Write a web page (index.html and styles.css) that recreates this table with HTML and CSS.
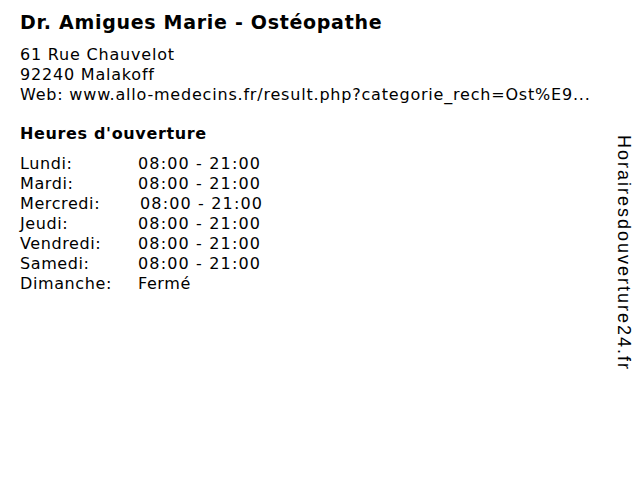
FILE: index.html
```html
<!DOCTYPE html>
<html lang="fr">
<head>
<meta charset="utf-8">
<link rel="stylesheet" href="styles.css">
</head>
<body>
<div class="page">
  <main class="info">
    <h1 class="title">Dr. Amigues Marie - Ostéopathe</h1>
    <div class="address">
      <div>61 Rue Chauvelot</div>
      <div>92240 Malakoff</div>
      <div>Web: www.allo-medecins.fr/result.php?categorie_rech=Ost%E9...</div>
    </div>
    <h2 class="hours-title">Heures d'ouverture</h2>
    <div class="hours">
      <span>Lundi:</span><span class="time">08:00 - 21:00</span>
      <span>Mardi:</span><span class="time">08:00 - 21:00</span>
      <span>Mercredi:</span><span class="time shift">08:00 - 21:00</span>
      <span>Jeudi:</span><span class="time">08:00 - 21:00</span>
      <span>Vendredi:</span><span class="time">08:00 - 21:00</span>
      <span>Samedi:</span><span class="time">08:00 - 21:00</span>
      <span>Dimanche:</span><span>Fermé</span>
    </div>
  </main>
  <aside class="brand">Horairesdouverture24.fr</aside>
</div>
</body>
</html>
```
FILE: styles.css
```css
html, body {
  margin: 0;
  padding: 0;
  background: #fff;
}
body {
  width: 640px;
  height: 480px;
  overflow: hidden;
  font-family: "DejaVu Sans", Verdana, sans-serif;
  color: #000;
}
.page {
  display: flex;
  justify-content: space-between;
  padding: 10px 0 0 20px;
}
.title {
  margin: 0;
  font-size: 19px;
  font-weight: bold;
  line-height: 24px;
  letter-spacing: 0.7px;
}
.address {
  margin-top: 11px;
  font-size: 16px;
  line-height: 20px;
  letter-spacing: 0.8px;
}
.hours-title {
  margin: 18px 0 0;
  font-size: 16px;
  font-weight: bold;
  line-height: 22px;
  letter-spacing: 0.65px;
}
.hours {
  margin-top: 9px;
  display: grid;
  grid-template-columns: 118px auto;
  font-size: 16px;
  line-height: 20px;
  letter-spacing: 0.6px;
}
.time {
  letter-spacing: 1.15px;
}
.shift {
  padding-left: 2px;
}
.brand {
  writing-mode: vertical-rl;
  font-family: "Liberation Sans", Arial, sans-serif;
  font-size: 18px;
  letter-spacing: 2px;
  margin-top: 125px;
  margin-right: 6px;
  height: fit-content;
  color: #000;
}
```
